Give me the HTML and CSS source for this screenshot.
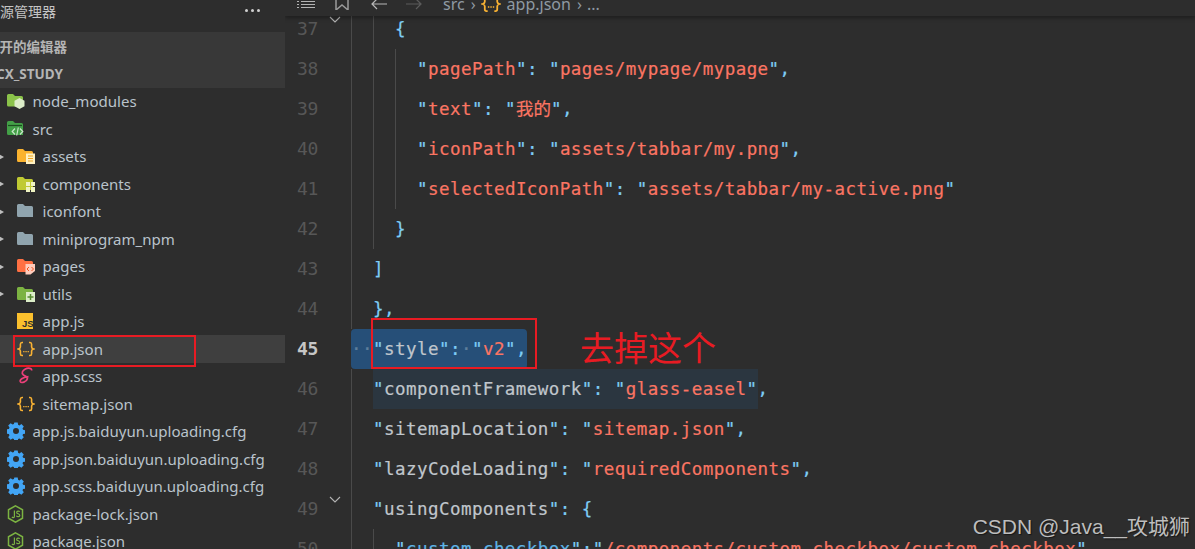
FILE: index.html
```html
<!DOCTYPE html>
<html lang="zh">
<head>
<meta charset="utf-8">
<title>app.json</title>
<link rel="stylesheet" href="styles.css">
</head>
<body>
<svg class="defs" width="0" height="0">
  <symbol id="braces" viewBox="0 0 18 18"><path d="M6 2.500H5C3.800 2.500 3.400 3.200 3.400 4.200V7C3.400 8 2.800 8.600 1.400 9 2.800 9.400 3.400 10 3.400 11V13.800C3.400 14.800 3.800 15.500 5 15.500H6M12 2.500H13C14.200 2.500 14.600 3.200 14.600 4.200V7C14.600 8 15.200 8.600 16.600 9 15.200 9.400 14.600 10 14.600 11V13.800C14.600 14.800 14.200 15.500 13 15.500H12" fill="none" stroke="#f9b233" stroke-width="1.600"/><path d="M6.200 11h1.300v1.300H6.200zM8.400 11h1.300v1.300H8.400zM10.600 11h1.300v1.300h-1.300z" fill="#f9b233"/></symbol>
  <symbol id="gear" viewBox="0 0 18 18"><path fill-rule="evenodd" fill="#42a5f5" d="M7.300 .5h3.400l.4 2.300 1.300.6 2-1.300 2.400 2.400-1.300 2 .6 1.300 2.300.4v3.400l-2.300.4-.6 1.300 1.300 2-2.400 2.400-2-1.300-1.300.6-.4 2.300H7.300l-.4-2.300-1.300-.6-2 1.300-2.400-2.400 1.300-2-.6-1.300-2.300-.4V7.300l2.300-.4.600-1.300-1.300-2 2.400-2.400 2 1.300 1.300-.6zM9 6a3 3 0 1 0 0 6 3 3 0 0 0 0-6z"/></symbol>
  <symbol id="nodejs" viewBox="0 0 18 18"><path d="M8.500 .8l7 4v8.400l-7 4-7-4V4.800z" fill="none" stroke="#7cb342" stroke-width="1.500"/><path d="M7.400 5.500v6c0 1.400-1.800 1.500-2.400.4M12.700 6.800c-.6-1-3-1.100-3 .6 0 1.800 3.100 1 3.100 3 0 1.700-2.700 1.600-3.400.4" fill="none" stroke="#7cb342" stroke-width="1.200"/></symbol>
</svg>
<div class="window">
  <aside class="sidebar">
    <header class="side-title">
      <span class="side-title-text">资源管理器</span>
      <span class="dots"><i></i><i></i><i></i></span>
    </header>
    <section class="side-group">
      <div class="group-row group-open">打开的编辑器</div>
      <div class="group-row group-proj">CX_STUDY</div>
    </section>
    <ul class="tree">
      <li class="row d0"><svg class="ic" viewBox="0 0 18 18"><path d="M0 3.500a1.500 1.500 0 0 1 1.500-1.500H6l2 2h6.500A1.500 1.500 0 0 1 16 5.500V14.500H1.500A1.500 1.500 0 0 1 0 13z" fill="#8bc34a"/><path d="M12.500 6l5 2.800v5.500l-5 2.800-5-2.800V8.800z" fill="#dcedc8"/></svg>node_modules</li>
      <li class="row d0"><svg class="ic" viewBox="0 0 18 18"><path d="M0 2.500a1.500 1.500 0 0 1 1.500-1.500H6l2 2h6.500A1.500 1.500 0 0 1 16 4.500V15H1.500A1.500 1.500 0 0 1 0 13.500z" fill="#43a047"/><path d="M1 5.500h14" stroke="#1d4d20" stroke-width="1.200"/><path d="M8 8.500l-2.800 3L8 14.500M13 8.500l2.800 3-2.800 3M11.300 7.500l-1.600 8" fill="none" stroke="#c8e6c9" stroke-width="1.200"/></svg>src</li>
      <li class="row d1"><i class="arrow"></i><svg class="ic" viewBox="0 0 18 18"><path d="M0 3.500a1.500 1.500 0 0 1 1.500-1.500H6l2 2h6.500A1.500 1.500 0 0 1 16 5.500V15H1.500A1.500 1.500 0 0 1 0 13.500z" fill="#fbb32f"/><path d="M9 6.500h9V17H9z" fill="#fff0c2"/><path d="M11 9h5M11 11.500h5M11 14h5" stroke="#f0a51e" stroke-width="1.200"/></svg>assets</li>
      <li class="row d1"><i class="arrow"></i><svg class="ic" viewBox="0 0 18 18"><path d="M0 3.500a1.500 1.500 0 0 1 1.500-1.500H6l2 2h6.500A1.500 1.500 0 0 1 16 5.500V15H1.500A1.500 1.500 0 0 1 0 13.500z" fill="#c0ca33"/><path d="M9 7h4v4H9zM14 7h4v4h-4zM9 12h4v5H9zM14 12h4v5h-4z" fill="#f0f4c3"/></svg>components</li>
      <li class="row d1"><i class="arrow"></i><svg class="ic" viewBox="0 0 18 18"><path d="M0 3.500a1.500 1.500 0 0 1 1.500-1.500H6l2 2h6.500A1.500 1.500 0 0 1 16 5.500V15H1.500A1.500 1.500 0 0 1 0 13.500z" fill="#90a4ae"/></svg>iconfont</li>
      <li class="row d1"><i class="arrow"></i><svg class="ic" viewBox="0 0 18 18"><path d="M0 3.500a1.500 1.500 0 0 1 1.500-1.500H6l2 2h6.500A1.500 1.500 0 0 1 16 5.500V15H1.500A1.500 1.500 0 0 1 0 13.500z" fill="#90a4ae"/></svg>miniprogram_npm</li>
      <li class="row d1"><i class="arrow"></i><svg class="ic" viewBox="0 0 18 18"><path d="M0 3.500a1.500 1.500 0 0 1 1.500-1.500H6l2 2h6.500A1.500 1.500 0 0 1 16 5.500V15H1.500A1.500 1.500 0 0 1 0 13.500z" fill="#ff7043"/><path d="M8.500 7H18v7l-4.500 3.500h-5z" fill="#ffccbc"/><path d="M12 10l-2 2 2 2M14.500 10l2 2-2 2" fill="none" stroke="#f4511e" stroke-width="1"/></svg>pages</li>
      <li class="row d1"><i class="arrow"></i><svg class="ic" viewBox="0 0 18 18"><path d="M0 3.500a1.500 1.500 0 0 1 1.500-1.500H6l2 2h6.500A1.500 1.500 0 0 1 16 5.500V15H1.500A1.500 1.500 0 0 1 0 13.500z" fill="#7cb342"/><path d="M9 7h9v10H9z" fill="#dcedc8"/><path d="M13.500 9v6M10.500 12h6" stroke="#558b2f" stroke-width="1.500"/></svg>utils</li>
      <li class="row d1"><svg class="ic" viewBox="0 0 18 18"><path d="M0 1h16v16H0z" fill="#fbc02d"/><text class="js-mark" x="5" y="15">JS</text></svg>app.js</li>
      <li class="row d1 selected"><svg class="ic"><use href="#braces"/></svg>app.json</li>
      <li class="row d1"><svg class="ic" viewBox="0 0 18 18"><path d="M14.500 3.500c.8-2.500-3.500-3-6.500-1.200C5.500 3.800 4 6.200 6.500 8c2.200 1.500 4.600 1.600 3.800 4-.8 2.800-6 4.600-7 2.600-.8-1.800 3-4.600 8.200-5" fill="none" stroke="#ec407a" stroke-width="1.700"/></svg>app.scss</li>
      <li class="row d1"><svg class="ic"><use href="#braces"/></svg>sitemap.json</li>
      <li class="row d0"><svg class="ic"><use href="#gear"/></svg>app.js.baiduyun.uploading.cfg</li>
      <li class="row d0"><svg class="ic"><use href="#gear"/></svg>app.json.baiduyun.uploading.cfg</li>
      <li class="row d0"><svg class="ic"><use href="#gear"/></svg>app.scss.baiduyun.uploading.cfg</li>
      <li class="row d0"><svg class="ic"><use href="#nodejs"/></svg>package-lock.json</li>
      <li class="row d0"><svg class="ic"><use href="#nodejs"/></svg>package.json</li>
    </ul>
  </aside>
  <main class="editor">
    <nav class="crumbs">
      <svg class="cr-ic cr-list" viewBox="0 0 18 10"><path d="M0 1.500h2M0 4.500h2M0 7.500h2M4 1.500h14M4 4.500h14M4 7.500h14" stroke="#b4b4b4" stroke-width="1.100" fill="none"/></svg>
      <svg class="cr-ic cr-book" viewBox="0 0 14 10"><path d="M1 0v10l6-5 6 5V0" fill="none" stroke="#9a9a9a" stroke-width="1.500"/></svg>
      <svg class="cr-ic cr-back" viewBox="0 0 16 10"><path d="M16 4H1.500M6 -1L1 4l5 5" fill="none" stroke="#b8b8b8" stroke-width="1.200"/></svg>
      <svg class="cr-ic cr-fwd" viewBox="0 0 16 10"><path d="M0 4h14.500M10 -1l5 5-5 5" fill="none" stroke="#5c5c5c" stroke-width="1.200"/></svg>
      <span class="cr-text cr-first">src</span><span class="cr-sep">›</span>
      <svg class="cr-brace"><use href="#braces"/></svg>
      <span class="cr-text">app.json</span><span class="cr-sep">›</span><span class="cr-text">...</span>
    </nav>
    <div class="lines">
      <div class="line"><span class="num">37</span><span class="fold"><svg viewBox="0 0 12 8" class="chev"><path d="M1 1l5 5 5-5" fill="none" stroke="#b4b4b4" stroke-width="1.100"/></svg></span><code class="code"><i class="ind"></i><i class="ind"></i><b class="p">{</b></code></div>
      <div class="line"><span class="num">38</span><span class="fold"></span><code class="code"><i class="ind"></i><i class="ind"></i><i class="ind"></i><b class="p">"</b><b class="s">pagePath</b><b class="p">":</b> <b class="p">"</b><b class="s">pages/mypage/mypage</b><b class="p">",</b></code></div>
      <div class="line"><span class="num">39</span><span class="fold"></span><code class="code"><i class="ind"></i><i class="ind"></i><i class="ind"></i><b class="p">"</b><b class="s">text</b><b class="p">":</b> <b class="p">"</b><b class="s cjk">我的</b><b class="p">",</b></code></div>
      <div class="line"><span class="num">40</span><span class="fold"></span><code class="code"><i class="ind"></i><i class="ind"></i><i class="ind"></i><b class="p">"</b><b class="s">iconPath</b><b class="p">":</b> <b class="p">"</b><b class="s">assets/tabbar/my.png</b><b class="p">",</b></code></div>
      <div class="line"><span class="num">41</span><span class="fold"></span><code class="code"><i class="ind"></i><i class="ind"></i><i class="ind"></i><b class="p">"</b><b class="s">selectedIconPath</b><b class="p">":</b> <b class="p">"</b><b class="s">assets/tabbar/my-active.png</b><b class="p">"</b></code></div>
      <div class="line"><span class="num">42</span><span class="fold"></span><code class="code"><i class="ind"></i><i class="ind"></i><b class="p">}</b></code></div>
      <div class="line"><span class="num">43</span><span class="fold"></span><code class="code"><i class="ind"></i><b class="p">]</b></code></div>
      <div class="line"><span class="num">44</span><span class="fold"></span><code class="code"><i class="ind"></i><b class="p">},</b></code></div>
      <div class="line"><span class="num active">45</span><span class="fold"></span><code class="code"><span class="sel"><b class="ws">··</b><b class="p">"</b><b class="k">style</b><b class="p">":</b><b class="ws">·</b><b class="p">"</b><b class="s">v2</b><b class="p">",</b></span></code></div>
      <div class="line"><span class="num">46</span><span class="fold"></span><code class="code"><i class="ind"></i><span class="match"><b class="p">"</b><b class="k">componentFramework</b><b class="p">":</b> <b class="p">"</b><b class="s">glass-easel</b><b class="p">"</b></span><b class="p">,</b></code></div>
      <div class="line"><span class="num">47</span><span class="fold"></span><code class="code"><i class="ind"></i><b class="p">"</b><b class="k">sitemapLocation</b><b class="p">":</b> <b class="p">"</b><b class="s">sitemap.json</b><b class="p">",</b></code></div>
      <div class="line"><span class="num">48</span><span class="fold"></span><code class="code"><i class="ind"></i><b class="p">"</b><b class="k">lazyCodeLoading</b><b class="p">":</b> <b class="p">"</b><b class="s">requiredComponents</b><b class="p">",</b></code></div>
      <div class="line"><span class="num">49</span><span class="fold"><svg viewBox="0 0 12 8" class="chev"><path d="M1 1l5 5 5-5" fill="none" stroke="#b4b4b4" stroke-width="1.100"/></svg></span><code class="code"><i class="ind"></i><b class="p">"</b><b class="k">usingComponents</b><b class="p">":</b> <b class="p">{</b></code></div>
      <div class="line"><span class="num">50</span><span class="fold"></span><code class="code"><i class="ind"></i><i class="ind"></i><b class="p">"</b><b class="k2">custom-checkbox</b><b class="p">":"</b><b class="s">/components/custom-checkbox/custom-checkbox</b><b class="p">"</b></code></div>
    </div>
  </main>
  <div class="mark mark-file"></div>
  <div class="mark mark-style"></div>
  <div class="note">去掉这个</div>
  <div class="watermark">CSDN @Java__攻城狮</div>
</div>
</body>
</html>
```
FILE: styles.css
```css
* { box-sizing: border-box; }
html, body { margin: 0; padding: 0; height: 100%; overflow: hidden; background: #2d2d2d; }
.defs { position: absolute; }
.window { position: relative; display: flex; width: 1195px; height: 549px; overflow: hidden; background: #2d2d2d; font-family: "Noto Sans", "Noto Sans CJK SC", sans-serif; }

.sidebar { width: 285px; flex: none; height: 549px; overflow: hidden; background: #2d2d2d; color: #b9c3cb; }
.side-title { display: flex; align-items: center; justify-content: space-between; height: 32px; padding: 0 25px 11px 0; color: #c4c4c4; font-size: 14px; }
.side-title-text { margin-left: -14px; white-space: nowrap; }
.dots { display: flex; gap: 3px; }
.dots i { width: 3px; height: 3px; border-radius: 50%; background: #d0d0d0; }
.side-group { background: #383838; height: 55.500px; }
.group-row { height: 27.500px; line-height: 27.500px; font-size: 13.500px; font-weight: 700; color: #b4b4b4; white-space: nowrap; }
.group-open { margin-left: -14px; padding-top: 2px; }
.group-proj { margin-left: -4px; padding-top: 1px; }

.tree { list-style: none; margin: 0; padding: 0; }
.row { position: relative; display: flex; align-items: center; height: 27.500px; font-size: 15.050px; white-space: nowrap; color: #b9c3cb; }
.d0 { padding-left: 7px; }
.d1 { padding-left: 17px; }
.ic { width: 18px; height: 18px; flex: none; margin-right: 7.500px; }
.selected { background: #3f3f3f; }
.arrow { position: absolute; left: -3px; top: 10px; width: 0; height: 0; border-left: 7px solid #bdbdbd; border-top: 4px solid transparent; border-bottom: 4px solid transparent; }
.js-mark { font: 700 9.500px "Liberation Sans", sans-serif; fill: #2d2d2d; }

.editor { position: relative; flex: 1; min-width: 0; height: 549px; overflow: hidden; background: #2d2d2d; }
.crumbs { position: relative; z-index: 2; display: flex; align-items: flex-start; height: 16px; padding: 0 0 0 12px; overflow: hidden; background: #2d2d2d; box-shadow: 0 2px 4px rgba(0, 0, 0, .35); color: #8f9aa3; font-size: 16px; line-height: 9px; white-space: nowrap; }
.cr-ic { flex: none; height: 10px; }
.cr-list { width: 18px; }
.cr-book { width: 14px; margin-left: 20px; }
.cr-back { width: 16px; margin-left: 22px; }
.cr-fwd { width: 16px; margin-left: 19px; }
.cr-first { margin-left: 21px; }
.cr-sep { margin: 0 5px 0 6px; }
.cr-brace { width: 20px; height: 20px; flex: none; margin: -6px 6px 0 0; }

.lines { margin-top: -7px; }
.line { display: flex; height: 40px; }
.num { width: 33px; flex: none; text-align: right; font: 18px/40px "DejaVu Sans Mono", monospace; letter-spacing: -.3px; color: #575757; }
.num.active { color: #c6c6c6; font-weight: 700; }
.fold { position: relative; width: 33px; flex: none; }
.chev { position: absolute; left: 11px; top: 7px; width: 12px; height: 8px; }
.code { display: block; flex: 1; min-width: 0; height: 40px; font: 17.500px/40px "DejaVu Sans Mono", "Noto Sans CJK SC", monospace; letter-spacing: .45px; white-space: pre; overflow: hidden; -webkit-text-stroke: .2px; }
.code b { font-weight: 400; }
.ind { display: inline-block; width: 22px; height: 40px; vertical-align: top; border-left: 1px solid #4a4a4a; }
.p { color: #7fcdf5; }
.s { color: #fb7563; }
.k { color: #c0c6cc; }
.k2 { color: #5fb4e6; }
.ws { color: #5f7f9c; }
.sel { display: inline-block; height: 40px; background: #264f78; border-radius: 4px; vertical-align: top; }
.match { display: inline-block; height: 40px; background: #2b3640; vertical-align: top; }
.cjk { letter-spacing: 0; }

.mark { position: absolute; border: 2px solid #e81b23; pointer-events: none; }
.mark-file { left: 13px; top: 335px; width: 183px; height: 32px; }
.mark-style { left: 371px; top: 318px; width: 166px; height: 51px; }
.note { position: absolute; left: 580px; top: 324px; color: #e81b23; font: 34px/46px "Noto Sans CJK SC", sans-serif; white-space: nowrap; }
.watermark { position: absolute; right: 5px; top: 514px; color: #bdbdbd; font: 21px/26px "Liberation Sans", "Noto Sans CJK SC", sans-serif; white-space: nowrap; text-shadow: 1px 1px 1px rgba(0, 0, 0, .5); }
```
